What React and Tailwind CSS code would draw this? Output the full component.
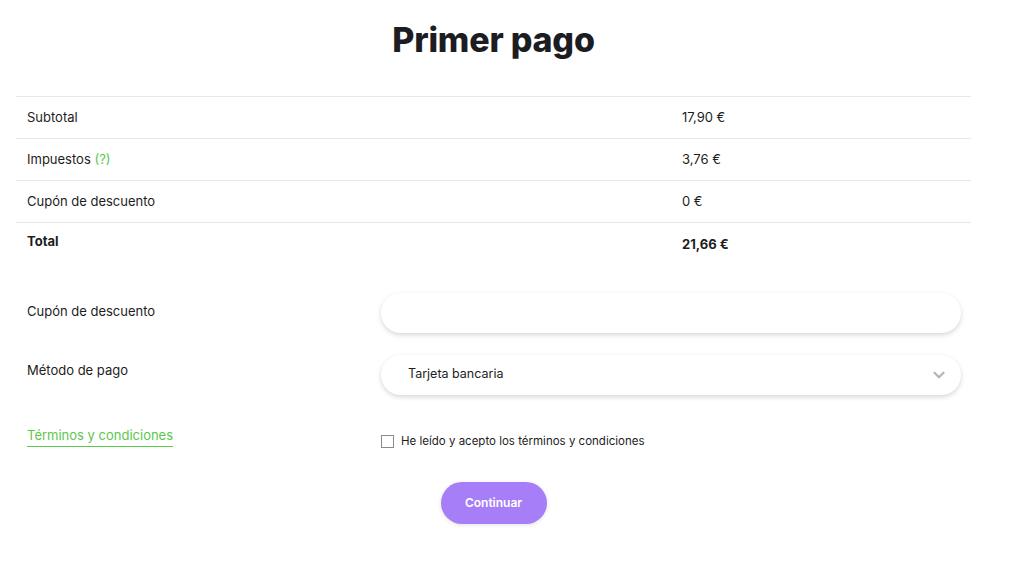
import { ChevronDown } from 'lucide-react'

const rows = [
  { label: 'Subtotal', value: '17,90 €' },
  { label: 'Impuestos', value: '3,76 €', hint: true },
  { label: 'Cupón de descuento', value: '0 €' },
]

export default function App() {
  return (
    <div
      className="min-h-screen bg-white text-[#1d1d22]"
      style={{ fontFamily: 'Inter, "Noto Sans", sans-serif' }}
    >
      <div className="ml-4 w-[955px]">
        <h1 className="pt-[18px] text-center text-[34px] font-extrabold leading-[44px] tracking-[-0.2px] text-[#1c1d23]">
          Primer pago
        </h1>

        <table className="mt-[34px] w-full border-collapse text-[13px]">
          <tbody>
            {rows.map((r) => (
              <tr key={r.label} className="border-t border-[#e8e8ec]">
                <td className="h-[42px] w-[666px] pl-[11px] align-middle">
                  {r.label}
                  {r.hint && <span className="text-[#5ac84b]"> (?)</span>}
                </td>
                <td className="h-[42px] align-middle">{r.value}</td>
              </tr>
            ))}
            <tr className="border-t border-[#e8e8ec]">
              <td className="h-[42px] pl-[11px] pb-[4px] align-middle font-bold">Total</td>
              <td className="h-[42px] pt-[2px] align-middle font-bold">21,66 €</td>
            </tr>
          </tbody>
        </table>

        <div className="mt-[28px] flex flex-col gap-[22px] text-[13px]">
          <div className="flex items-center">
            <div className="w-[365px] pl-[11px] pb-[2px]">Cupón de descuento</div>
            <input
              className="h-[40px] w-[580px] rounded-full bg-white px-6 shadow-[0_2px_5px_rgba(0,0,0,0.16)] outline-none"
              type="text"
            />
          </div>
          <div className="flex items-center">
            <div className="w-[365px] pl-[11px] pb-[8px]">Método de pago</div>
            <div className="flex h-[40px] w-[580px] items-center justify-between rounded-full bg-white pl-[27px] pr-[13px] shadow-[0_2px_5px_rgba(0,0,0,0.16)]">
              <span className="text-[12.5px]">Tarjeta bancaria</span>
              <ChevronDown className="h-[18px] w-[18px] text-[#b5b5b5]" strokeWidth={3} />
            </div>
          </div>
        </div>

        <div className="mt-[27px] flex items-start">
          <div className="w-[365px] pl-[11px]">
            <a className="inline-block border-b border-[#5ac84b] pb-[1px] text-[13px] text-[#5ac84b]">
              Términos y condiciones
            </a>
          </div>
          <label className="mt-[11px] flex items-center gap-[7px] text-[11.5px]">
            <span className="h-[13px] w-[13px] border border-[#8a8a8a] bg-white" />
            He leído y acepto los términos y condiciones
          </label>
        </div>

        <div className="mt-[32px] flex justify-center">
          <button className="h-[42px] w-[106px] rounded-full bg-[#a57ef8] text-[12px] font-semibold text-white shadow-[0_1px_4px_rgba(0,0,0,0.12)]">
            Continuar
          </button>
        </div>
      </div>
    </div>
  )
}
